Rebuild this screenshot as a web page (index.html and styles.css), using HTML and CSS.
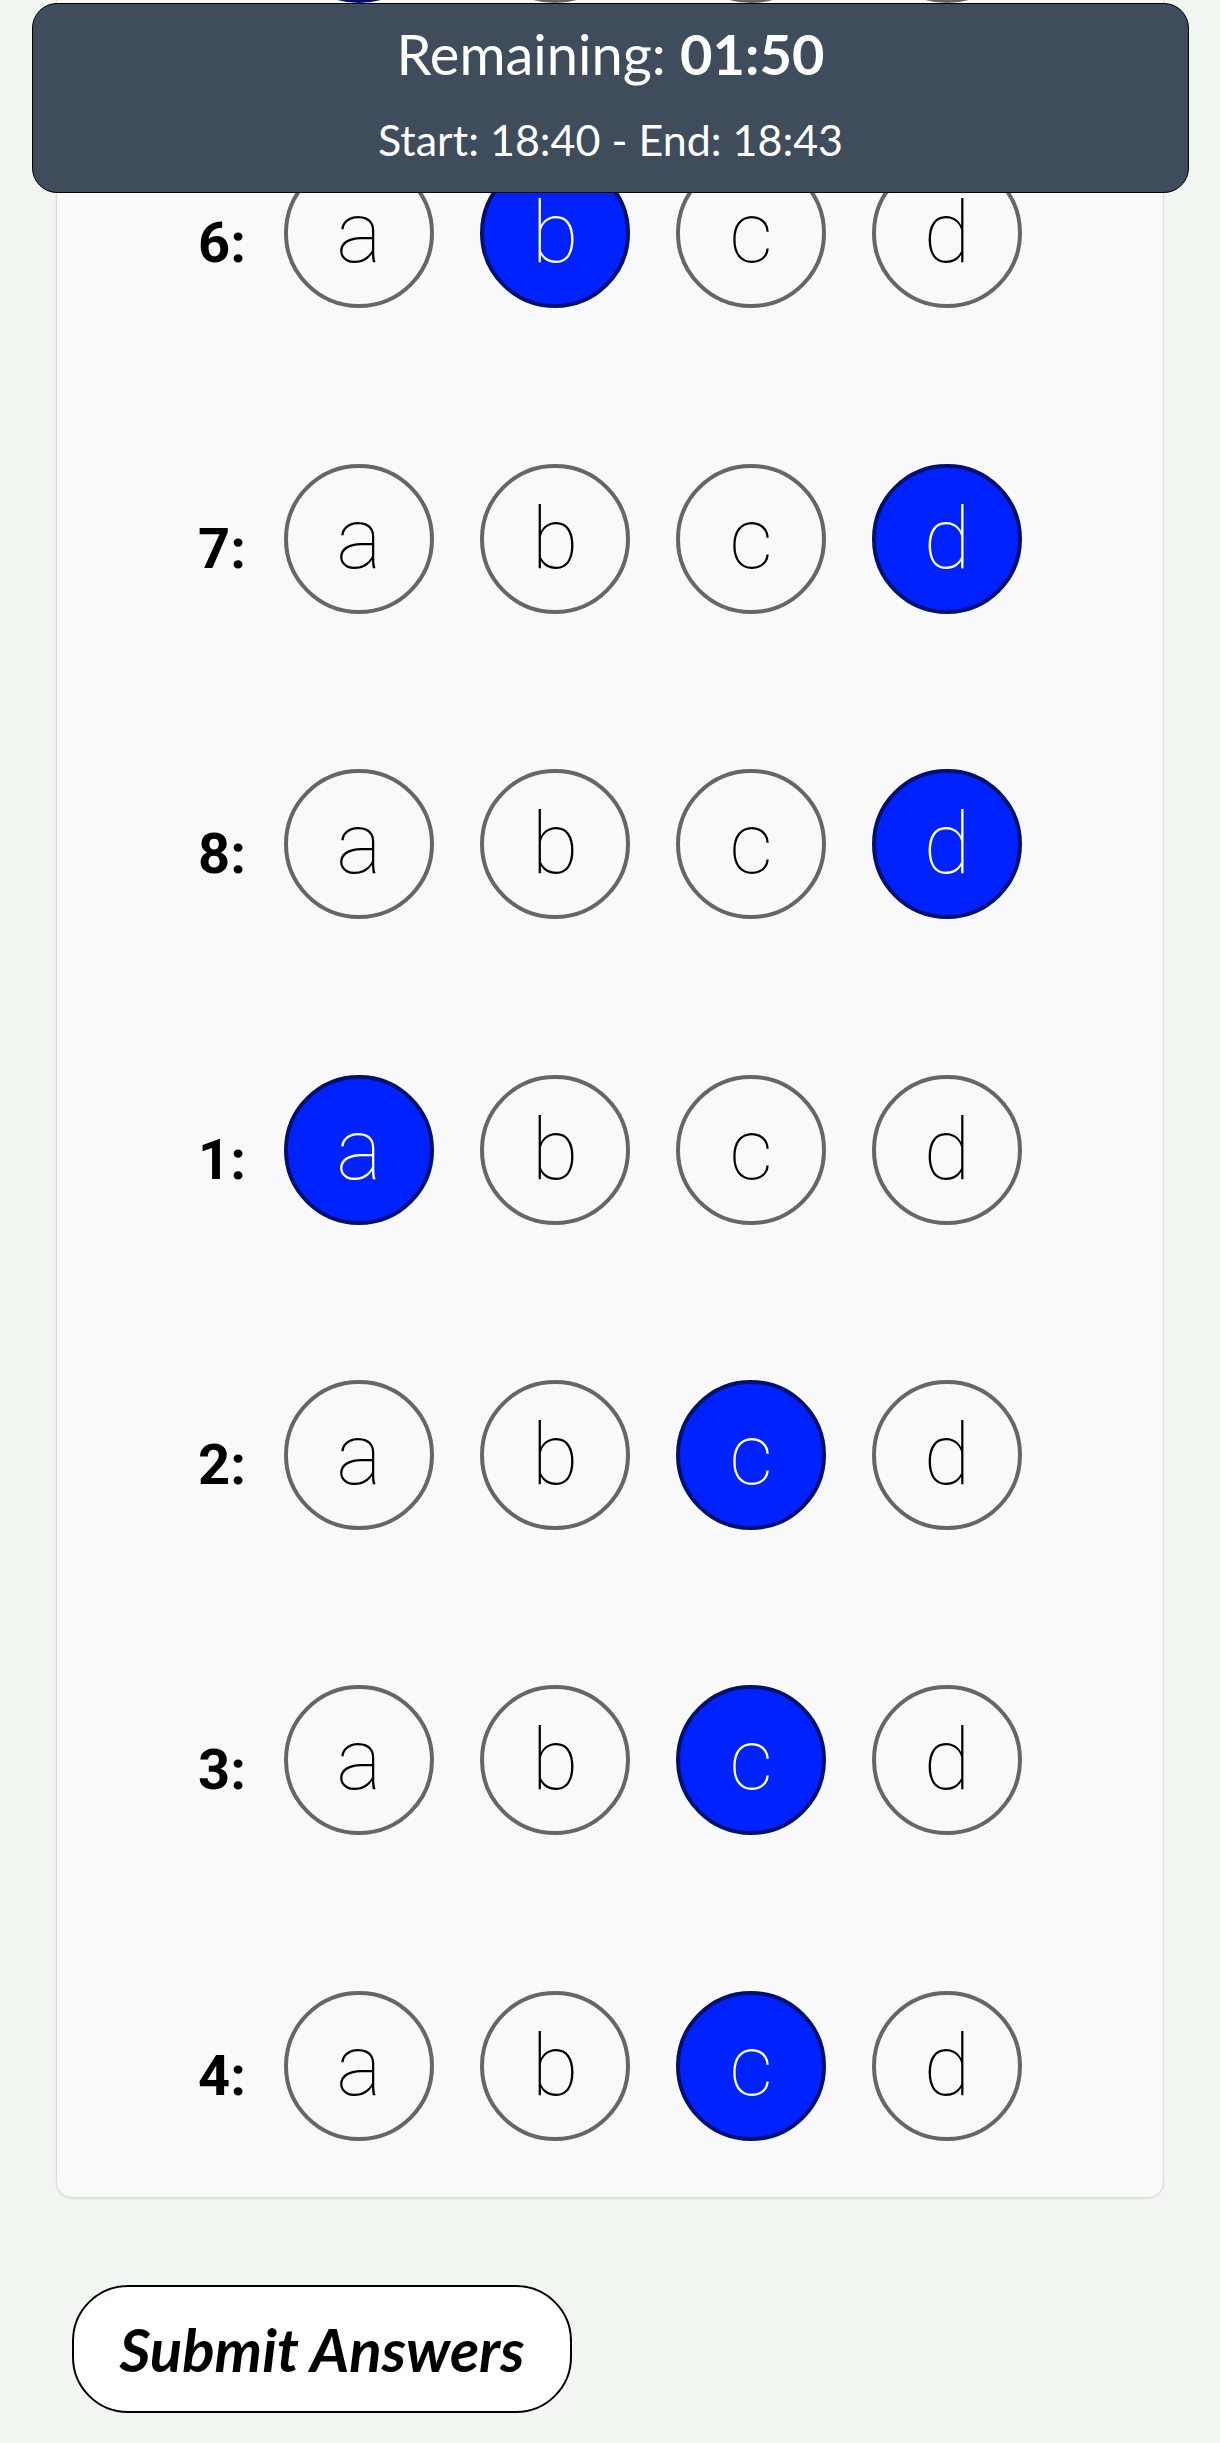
FILE: index.html
```html
<!DOCTYPE html>
<html lang="en">
<head>
<meta charset="utf-8">
<title>Quiz</title>
<link rel="stylesheet" href="styles.css">
</head>
<body>
<header class="timer">
  <p class="timer-remaining">Remaining: <strong>01:50</strong></p>
  <p class="timer-range">Start: 18:40 - End: 18:43</p>
</header>
<main class="page">
  <section class="sheet">
    <div class="question">
      <span class="q-label">5:</span>
      <div class="options">
        <span class="opt selected">a</span><span class="opt">b</span><span class="opt">c</span><span class="opt">d</span>
      </div>
    </div>
    <div class="question">
      <span class="q-label">6:</span>
      <div class="options">
        <span class="opt">a</span><span class="opt selected">b</span><span class="opt">c</span><span class="opt">d</span>
      </div>
    </div>
    <div class="question">
      <span class="q-label">7:</span>
      <div class="options">
        <span class="opt">a</span><span class="opt">b</span><span class="opt">c</span><span class="opt selected">d</span>
      </div>
    </div>
    <div class="question">
      <span class="q-label">8:</span>
      <div class="options">
        <span class="opt">a</span><span class="opt">b</span><span class="opt">c</span><span class="opt selected">d</span>
      </div>
    </div>
    <div class="question">
      <span class="q-label">1:</span>
      <div class="options">
        <span class="opt selected">a</span><span class="opt">b</span><span class="opt">c</span><span class="opt">d</span>
      </div>
    </div>
    <div class="question">
      <span class="q-label">2:</span>
      <div class="options">
        <span class="opt">a</span><span class="opt">b</span><span class="opt selected">c</span><span class="opt">d</span>
      </div>
    </div>
    <div class="question">
      <span class="q-label">3:</span>
      <div class="options">
        <span class="opt">a</span><span class="opt">b</span><span class="opt selected">c</span><span class="opt">d</span>
      </div>
    </div>
    <div class="question">
      <span class="q-label">4:</span>
      <div class="options">
        <span class="opt">a</span><span class="opt">b</span><span class="opt selected">c</span><span class="opt">d</span>
      </div>
    </div>
  </section>
  <div class="actions">
    <button class="submit" type="button">Submit Answers</button>
  </div>
</main>
</body>
</html>
```
FILE: styles.css
```css
html, body {
  margin: 0;
  padding: 0;
}

body {
  background: #f1f6f0;
  font-family: "Lato", "Open Sans", sans-serif;
  overflow: hidden;
}

/* fixed timer bar that lies over the scrolled content */
.timer {
  position: fixed;
  top: 3px;
  left: 32px;
  right: 31px;
  z-index: 10;
  box-sizing: border-box;
  height: 190px;
  padding: 16px 0 0;
  background: #3e4c5b;
  border: 1px solid #000;
  border-radius: 25px;
  color: #fff;
  text-align: center;
}

.timer p {
  margin: 0;
  line-height: 1.2;
}

.timer-remaining {
  font-size: 56px;
  font-weight: 400;
}

.timer-remaining strong {
  font-weight: 700;
}

.timer .timer-range {
  margin-top: 27px;
  font-size: 43px;
}

/* page content, shown scrolled down */
.page {
  display: flex;
  flex-direction: column;
  padding: 0 56px 30px;
}

.sheet {
  margin-top: -204px;
  display: flex;
  flex-direction: column;
  gap: 155.4px;
  padding: 56px 0 56px;
  background: #f9f9f9;
  border: 1px solid #dcdcdc;
  border-radius: 16px;
  box-shadow: 0 1px 2px rgba(0, 0, 0, 0.08);
}

.question {
  display: flex;
  justify-content: center;
  align-items: baseline;
  gap: 38px;
}

.q-label {
  font-family: "Roboto", sans-serif;
  font-weight: 700;
  font-size: 56px;
  color: #000;
}

.options {
  display: flex;
  align-items: baseline;
  gap: 46px;
}

.opt {
  display: block;
  box-sizing: border-box;
  width: 150px;
  height: 150px;
  border: 4px solid #666;
  border-radius: 50%;
  font-family: "Roboto", sans-serif;
  font-weight: 100;
  font-size: 86px;
  line-height: 142px;
  text-align: center;
  color: #000;
}

.opt.selected {
  background: #0022ff;
  border-color: #00106e;
  color: #fff;
}

.actions {
  display: flex;
  padding: 87px 16px 0;
}

.submit {
  box-sizing: border-box;
  width: 500px;
  height: 128px;
  padding: 0;
  background: #fff;
  border: 2px solid #000;
  border-radius: 56px;
  font-family: "Lato", sans-serif;
  font-size: 60px;
  font-weight: 700;
  font-style: italic;
  color: #000;
}
```
